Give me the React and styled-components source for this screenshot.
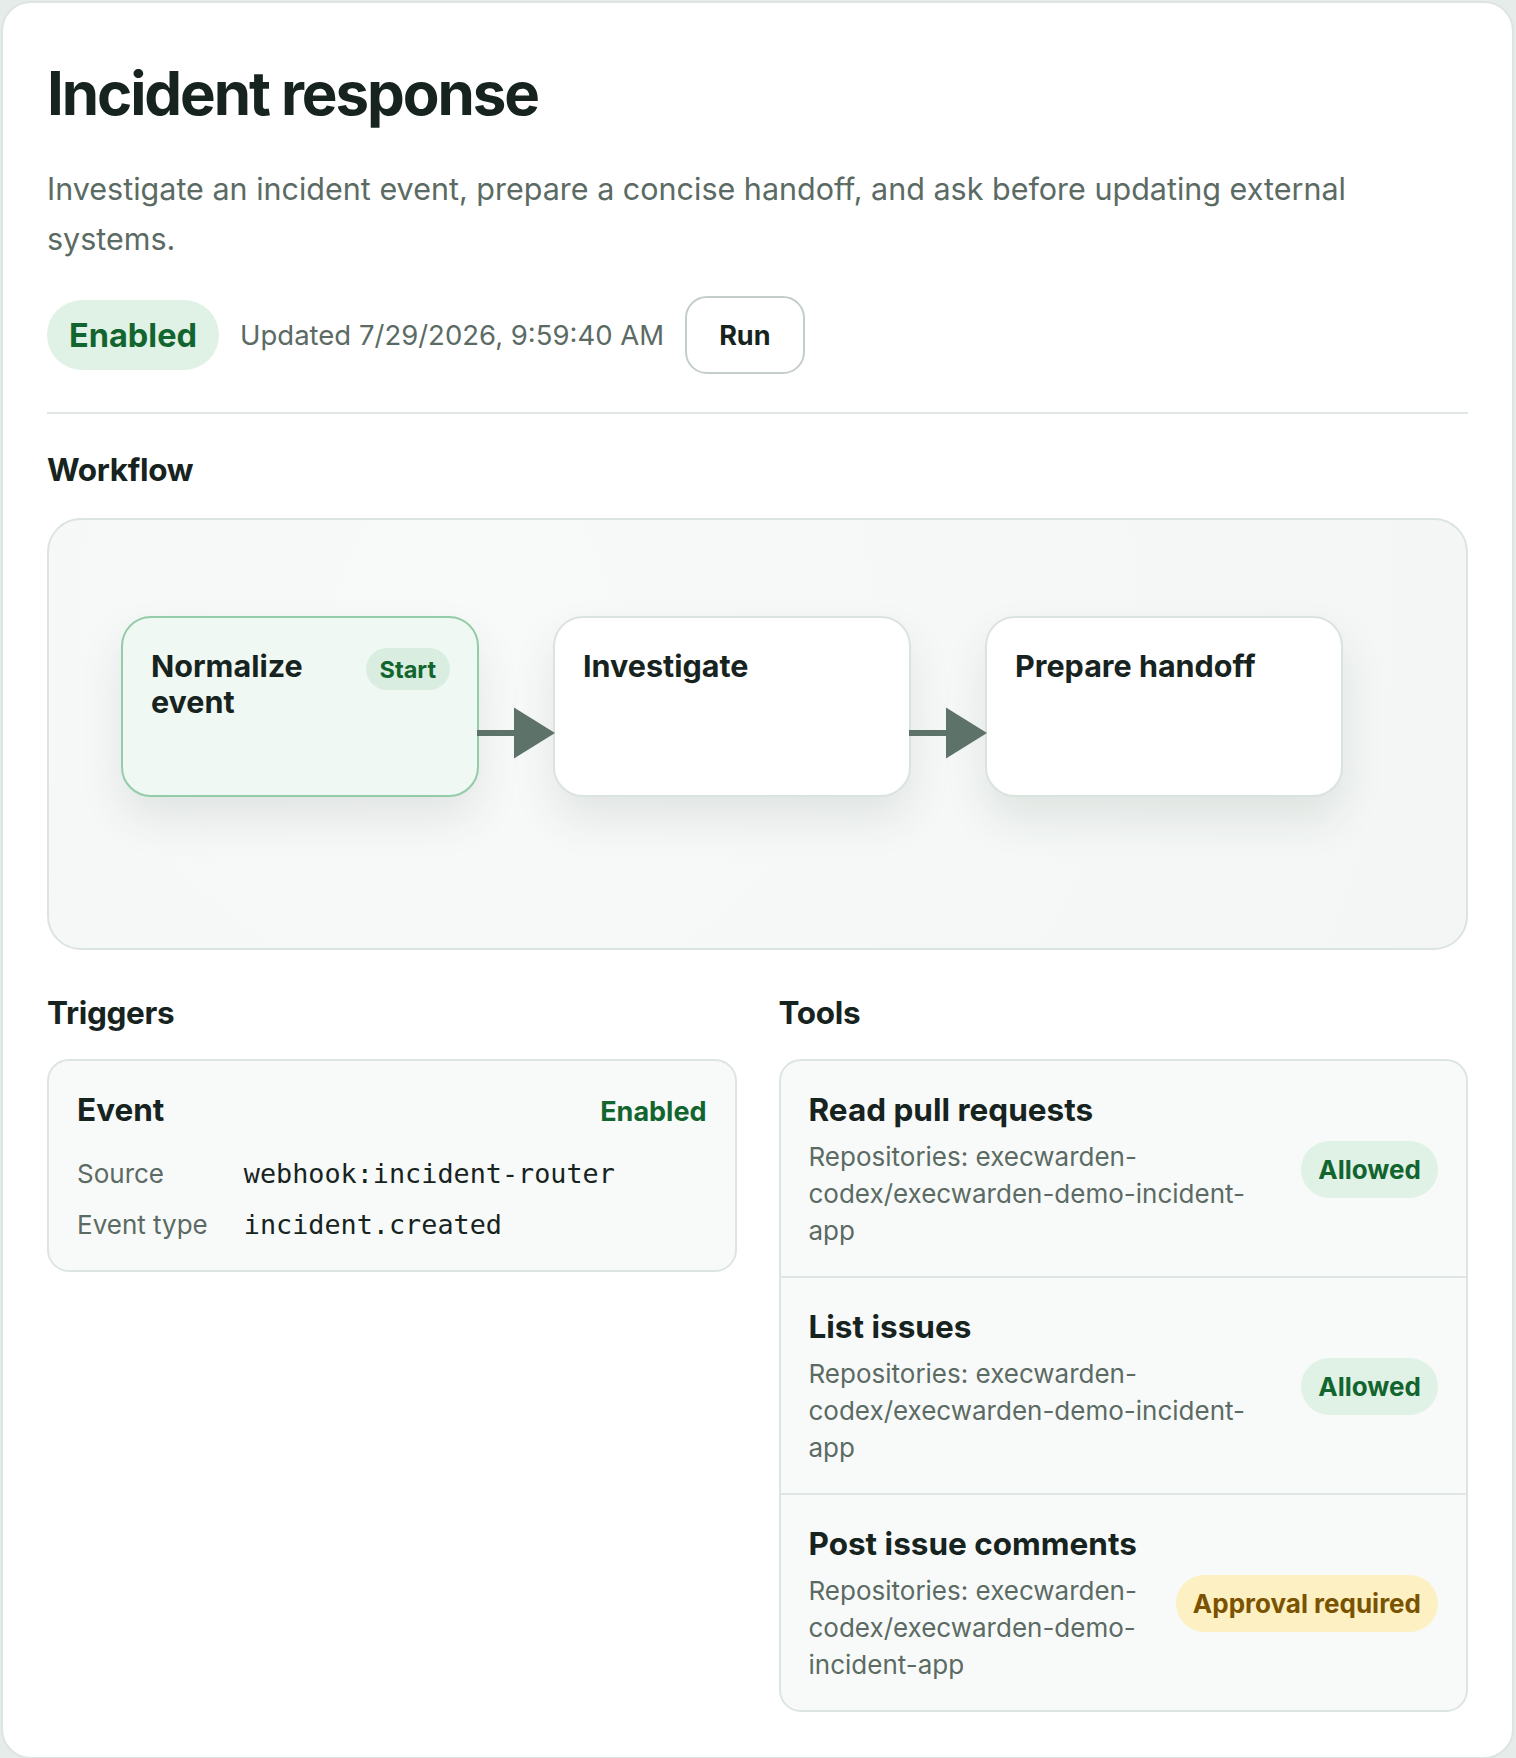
import React from "react";
import styled, { createGlobalStyle } from "styled-components";

const GlobalStyle = createGlobalStyle`
  html, body {
    margin: 0;
    padding: 0;
    background: #e6ecea;
  }
  body {
    padding: 1px 2px 2px 1px;
    font-family: Inter, "Noto Sans", "Liberation Sans", sans-serif;
    color: #17231e;
  }
  * { box-sizing: border-box; }
`;

const Page = styled.main`
  background: #ffffff;
  border: 2px solid #dde5e1;
  border-radius: 30px;
  padding: 58px 44px 45px;
`;

const Title = styled.h1`
  margin: 0;
  font-size: 60px;
  line-height: 64px;
  font-weight: 700;
  letter-spacing: -0.035em;
  color: #17231e;
`;

const Description = styled.p`
  margin: 39px 0 0;
  font-size: 30.5px;
  line-height: 50px;
  color: #5b6b64;
  max-width: 1340px;
`;

const StatusRow = styled.div`
  display: flex;
  align-items: center;
  gap: 21px;
  margin-top: 32px;
`;

const Pill = styled.span`
  display: inline-flex;
  align-items: center;
  justify-content: center;
  height: ${(p) => p.$h || 57}px;
  padding: 0 ${(p) => p.$px || 17}px;
  border-radius: 999px;
  font-size: ${(p) => p.$size || 26}px;
  font-weight: 700;
  white-space: nowrap;
  background: ${(p) => (p.$tone === "warn" ? "#fdf0c3" : "#dff2e5")};
  color: ${(p) => (p.$tone === "warn" ? "#7b5300" : "#13652f")};
`;

const Meta = styled.span`
  font-size: 27.5px;
  color: #5b6b64;
`;

const RunButton = styled.button`
  height: 78px;
  padding: 0 32px;
  border: 2px solid #c4cec9;
  border-radius: 22px;
  background: #fff;
  font-family: inherit;
  font-size: 27px;
  font-weight: 700;
  color: #17231e;
`;

const Divider = styled.hr`
  margin: 38px 0 0;
  border: none;
  height: 2px;
  background: #dfe6e3;
`;

const SectionTitle = styled.h2`
  margin: ${(p) => p.$mt || 0}px 0 ${(p) => p.$mb || 26}px;
  font-size: 31.5px;
  line-height: 40px;
  font-weight: 700;
  letter-spacing: -0.01em;
  color: #17231e;
`;

const Canvas = styled.div`
  display: flex;
  align-items: flex-start;
  height: 432px;
  padding: 96px 0 0 72px;
  border: 2px solid #dce4e0;
  border-radius: 34px;
  background: radial-gradient(circle at 30% 20%, #f8faf9 0%, #f3f6f4 100%);
`;

const Node = styled.div`
  position: relative;
  z-index: 1;
  width: 358px;
  height: 181px;
  flex: none;
  display: flex;
  align-items: flex-start;
  justify-content: space-between;
  gap: 16px;
  padding: 30px 27px 30px 28px;
  border-radius: 30px;
  border: 2px solid ${(p) => (p.$start ? "#93cca8" : "#dbe3df")};
  background: ${(p) => (p.$start ? "#eff8f2" : "#ffffff")};
  box-shadow: 0 22px 44px rgba(35, 60, 48, 0.1);
`;

const NodeTitle = styled.div`
  font-size: 30.5px;
  line-height: 36px;
  font-weight: 700;
  color: #17231e;
`;

const StartBadge = styled.span`
  flex: none;
  height: 42px;
  padding: 0 14px;
  display: inline-flex;
  align-items: center;
  border-radius: 999px;
  background: #d9eee0;
  color: #13652f;
  font-size: 23.5px;
  font-weight: 700;
`;

const ArrowBox = styled.svg`
  flex: none;
  display: block;
  margin: 0 -2px;
  position: relative;
  z-index: 2;
`;

const Arrow = () => (
  <ArrowBox width="78" height="181" viewBox="0 0 78 181">
    <rect x="0" y="114" width="40" height="6" fill="#5d7268" />
    <polygon points="37,91.5 78,117 37,142.5" fill="#5d7268" />
  </ArrowBox>
);

const Columns = styled.div`
  display: grid;
  grid-template-columns: 1fr 1fr;
  column-gap: 42px;
  align-items: start;
`;

const Panel = styled.section`
  border: 2px solid #dde5e1;
  border-radius: 22px;
  background: #f8faf9;
  overflow: hidden;
`;

const TriggerBody = styled.div`
  padding: 29px 28px 27px;
`;

const CardHead = styled.div`
  display: flex;
  align-items: baseline;
  justify-content: space-between;
`;

const CardTitle = styled.div`
  font-size: 31.5px;
  line-height: 39px;
  font-weight: 700;
  color: #17231e;
`;

const StatusText = styled.span`
  font-size: 27px;
  font-weight: 700;
  color: #13652f;
`;

const DefList = styled.dl`
  display: grid;
  grid-template-columns: auto 1fr;
  column-gap: 36px;
  row-gap: 15px;
  align-items: baseline;
  margin: 27px 0 0;
`;

const Term = styled.dt`
  font-size: 26px;
  line-height: 36px;
  color: #5b6b64;
`;

const Value = styled.dd`
  margin: 0;
  font-family: "DejaVu Sans Mono", "Liberation Mono", monospace;
  font-size: 26.8px;
  line-height: 36px;
  color: #17231e;
`;

const ToolRow = styled.div`
  display: flex;
  align-items: center;
  justify-content: space-between;
  gap: 24px;
  padding: 29px 28px 27px;
  & + & {
    border-top: 2px solid #dfe6e3;
  }
`;

const ToolText = styled.div`
  min-width: 0;
  flex: 1;
`;

const ToolDesc = styled.div`
  margin-top: 9px;
  font-size: 26px;
  line-height: 37px;
  color: #5b6b64;
`;

const tools = [
  { name: "Read pull requests", status: "Allowed", tone: "ok" },
  { name: "List issues", status: "Allowed", tone: "ok" },
  { name: "Post issue comments", status: "Approval required", tone: "warn" },
];

export default function App() {
  return (
    <>
      <GlobalStyle />
      <Page>
        <Title>Incident response</Title>
        <Description>
          Investigate an incident event, prepare a concise handoff, and ask before updating external
          systems.
        </Description>
        <StatusRow>
          <Pill $h={70} $px={22} $size={32.5}>Enabled</Pill>
          <Meta>Updated 7/29/2026, 9:59:40 AM</Meta>
          <RunButton>Run</RunButton>
        </StatusRow>
        <Divider />

        <SectionTitle $mt={36} $mb={28}>Workflow</SectionTitle>
        <Canvas>
          <Node $start>
            <NodeTitle>Normalize event</NodeTitle>
            <StartBadge>Start</StartBadge>
          </Node>
          <Arrow />
          <Node>
            <NodeTitle>Investigate</NodeTitle>
          </Node>
          <Arrow />
          <Node>
            <NodeTitle>Prepare handoff</NodeTitle>
          </Node>
        </Canvas>

        <Columns>
          <div>
            <SectionTitle $mt={43}>Triggers</SectionTitle>
            <Panel>
              <TriggerBody>
                <CardHead>
                  <CardTitle>Event</CardTitle>
                  <StatusText>Enabled</StatusText>
                </CardHead>
                <DefList>
                  <Term>Source</Term>
                  <Value>webhook:incident-router</Value>
                  <Term>Event type</Term>
                  <Value>incident.created</Value>
                </DefList>
              </TriggerBody>
            </Panel>
          </div>
          <div>
            <SectionTitle $mt={43}>Tools</SectionTitle>
            <Panel>
              {tools.map((t) => (
                <ToolRow key={t.name}>
                  <ToolText>
                    <CardTitle>{t.name}</CardTitle>
                    <ToolDesc>Repositories: execwarden-codex/execwarden-demo-incident-app</ToolDesc>
                  </ToolText>
                  <Pill $tone={t.tone}>{t.status}</Pill>
                </ToolRow>
              ))}
            </Panel>
          </div>
        </Columns>
      </Page>
    </>
  );
}
